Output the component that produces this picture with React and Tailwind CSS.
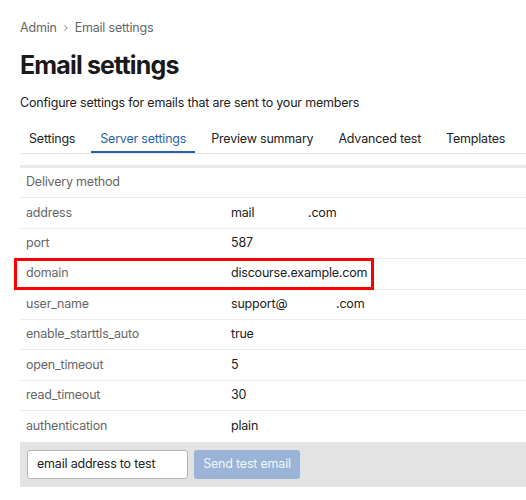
import { ChevronRight } from 'lucide-react'

const rows = [
  { label: 'address', value: <><span className="inline-block w-[77px]">mail</span>.com</> },
  { label: 'port', value: '587' },
  { label: 'domain', value: 'discourse.example.com', highlight: true },
  { label: 'user_name', value: <><span className="inline-block w-[105px]">support@</span>.com</> },
  { label: 'enable_starttls_auto', value: 'true' },
  { label: 'open_timeout', value: '5' },
  { label: 'read_timeout', value: '30' },
  { label: 'authentication', value: 'plain', last: true },
]

const tabs = ['Settings', 'Server settings', 'Preview summary', 'Advanced test', 'Templates']

export default function App() {
  return (
    <div className="min-h-[500px] bg-white pl-[20px] pt-[19px] font-['Inter','Noto_Sans',sans-serif] text-[#222] text-[12.5px] tracking-[-0.2px] overflow-hidden">
      <div className="flex items-center leading-[18px] text-[#666]">
        <span>Admin</span>
        <ChevronRight className="w-[10px] h-[10px] mx-[4px]" strokeWidth={2} />
        <span>Email settings</span>
      </div>

      <h1 className="mt-[12px] text-[25px] leading-[32px] font-bold tracking-[-0.85px] text-[#1a1a1a]">Email settings</h1>

      <p className="mt-[13px] leading-[18px]">Configure settings for emails that are sent to your members</p>

      <div className="mt-[18px] flex gap-[7px] border-b border-[#e6e6e6] leading-[18px] whitespace-nowrap">
        {tabs.map((t, i) => (
          <div
            key={t}
            className={i === 1
              ? 'px-[9px] pb-[3px] border-b-2 border-[#2563b0] text-[#2563b0]'
              : 'px-[9px] pb-[3px] border-b-2 border-transparent'}
          >
            {t}
          </div>
        ))}
      </div>

      <div className="mt-[11px] border-t-[3px] border-[#e9e9e9]">
        <div className="h-[30.4px] flex items-center px-[6px] border-b border-[#ececec] text-[#666]">Delivery method</div>
        {rows.map(r => (
          <div key={r.label} className={`relative h-[30.4px] flex items-center ${r.last ? '' : 'border-b border-[#ececec]'}`}>
            <div className="w-[211px] pl-[6px] text-[#666]">{r.label}</div>
            <div className="text-[#222]">{r.value}</div>
            {r.highlight && (
              <div className="absolute left-[-6px] top-[-1px] w-[360px] h-[32px] border-[3px] border-[#ff0000]"></div>
            )}
          </div>
        ))}
        <div className="h-[45px] bg-[#e3e3e3] flex items-center gap-[6px] pl-[7px]">
          <div className="w-[161px] h-[29px] bg-white border border-[#b5b5b5] rounded-[3px] flex items-center pl-[9px] text-[#222]">
            email address to test
          </div>
          <div className="w-[106px] h-[29px] bg-[#99b4d6] rounded-[3px] flex items-center justify-center text-[#f3f6fa]">
            Send test email
          </div>
        </div>
      </div>
    </div>
  )
}
